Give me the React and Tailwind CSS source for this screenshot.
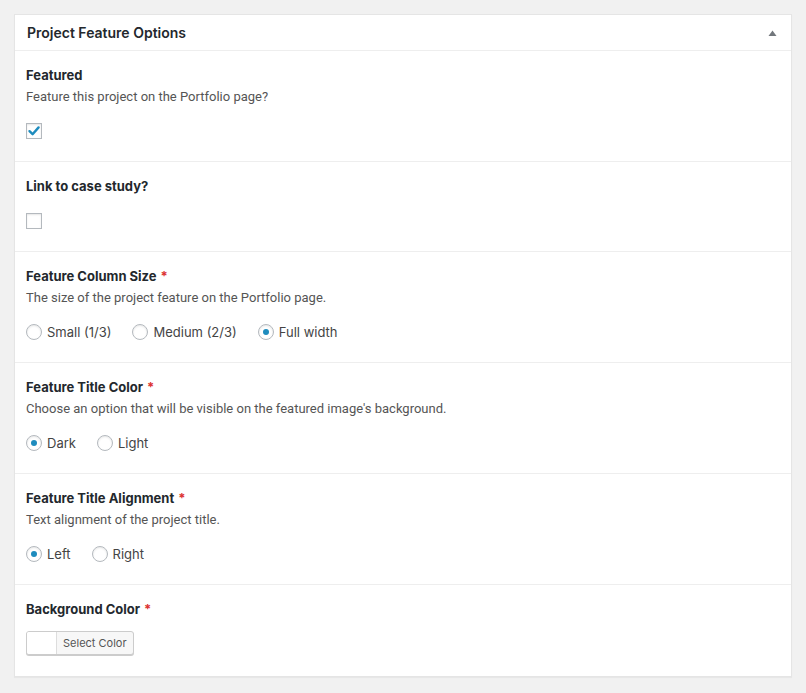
import React from "react";

const font = { fontFamily: 'Inter, "Noto Sans", sans-serif' };

const Checkbox = ({ checked }) => (
  <span className="flex h-4 w-4 items-center justify-center border border-[#b4b9be] bg-white shadow-[inset_0_1px_2px_rgba(0,0,0,0.1)]">
    {checked && (
      <svg width="14" height="14" viewBox="0 0 14 14">
        <path d="M2.5 7.2 L5.6 10.2 L11.6 3.4" fill="none" stroke="#1e8cbe" strokeWidth="2.4" strokeLinecap="round" strokeLinejoin="round" />
      </svg>
    )}
  </span>
);

const Radio = ({ checked, label }) => (
  <label className="flex h-4 items-center gap-[5px]">
    <span className="flex h-4 w-4 items-center justify-center rounded-full border border-[#b4b9be] bg-white shadow-[inset_0_1px_2px_rgba(0,0,0,0.1)]">
      {checked && <span className="h-[6px] w-[6px] rounded-full bg-[#1e8cbe]" />}
    </span>
    <span className="text-[13px] leading-4 text-[#444]">{label}</span>
  </label>
);

const Field = ({ label, required, desc, children, last, gap }) => (
  <div className={"px-[11px] pt-[15px]" + (last ? " pb-[21px]" : " pb-[22px] border-b border-[#eee]")}>
    <div className="text-[13px] font-bold leading-[18px] text-[#23282d]">
      {label}
      {required && <span className="ml-1 text-[#dc3232]">*</span>}
    </div>
    {desc && (
      <div className="mt-1 text-[13px] leading-[18px] text-[#555]" style={{ fontFamily: 'Roboto, "Noto Sans", sans-serif' }}>
        {desc}
      </div>
    )}
    <div className={gap || (desc ? "mt-[17px]" : "mt-[18px]")}>{children}</div>
  </div>
);

export default function App() {
  return (
    <div className="min-h-screen bg-[#f1f1f1] px-[14px] pt-[14px]" style={font}>
      <div className="w-[778px] border border-[#e5e5e5] bg-white shadow-[0_1px_1px_rgba(0,0,0,0.04)]">
        <div className="flex h-[36px] items-center justify-between border-b border-[#eee] pl-[12px] pr-[14px]">
          <h2 className="text-[14px] font-semibold text-[#23282d]">Project Feature Options</h2>
          <svg width="9" height="6" viewBox="0 0 9 6">
            <path d="M0.5 6 L4.5 0.5 L8.5 6 Z" fill="#72777c" />
          </svg>
        </div>

        <Field label="Featured" desc="Feature this project on the Portfolio page?">
          <Checkbox checked />
        </Field>

        <Field label="Link to case study?">
          <Checkbox />
        </Field>

        <Field label="Feature Column Size" required desc="The size of the project feature on the Portfolio page.">
          <div className="flex gap-[21px]">
            <Radio label="Small (1/3)" />
            <Radio label="Medium (2/3)" />
            <Radio checked label="Full width" />
          </div>
        </Field>

        <Field label="Feature Title Color" required desc="Choose an option that will be visible on the featured image's background.">
          <div className="flex gap-[21px]">
            <Radio checked label="Dark" />
            <Radio label="Light" />
          </div>
        </Field>

        <Field label="Feature Title Alignment" required desc="Text alignment of the project title.">
          <div className="flex gap-[21px]">
            <Radio checked label="Left" />
            <Radio label="Right" />
          </div>
        </Field>

        <Field label="Background Color" required last gap="mt-[13px]">
          <button className="flex h-[24px] overflow-hidden rounded-[3px] border border-[#ccc] bg-[#f7f7f7] shadow-[0_1px_0_#ccc]">
            <span className="h-full w-[30px] border-r border-[#ddd] bg-white" />
            <span className="px-[6px] text-[11px] leading-[22px] text-[#555]">Select Color</span>
          </button>
        </Field>
      </div>
    </div>
  );
}
